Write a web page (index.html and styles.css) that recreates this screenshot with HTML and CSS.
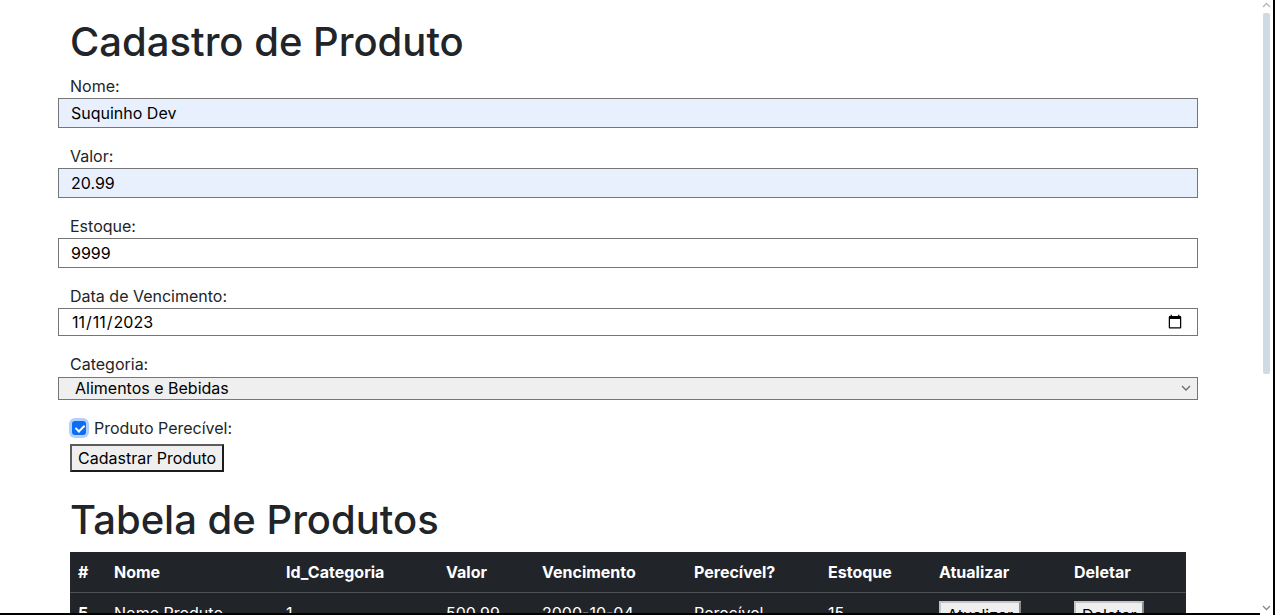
FILE: index.html
```html
<!DOCTYPE html>
<html lang="pt-BR">
<head>
<meta charset="utf-8">
<title>Cadastro de Produto</title>
<link rel="stylesheet" href="styles.css">
</head>
<body>
<main class="page">
  <h1 class="title">Cadastro de Produto</h1>
  <form class="form">
    <div class="field">
      <label class="label" for="nome">Nome:</label>
      <input class="input autofill" id="nome" type="text" value="Suquinho Dev">
    </div>
    <div class="field">
      <label class="label" for="valor">Valor:</label>
      <input class="input autofill" id="valor" type="text" value="20.99">
    </div>
    <div class="field">
      <label class="label" for="estoque">Estoque:</label>
      <input class="input" id="estoque" type="text" value="9999">
    </div>
    <div class="field">
      <label class="label" for="venc">Data de Vencimento:</label>
      <input class="input date" id="venc" type="date" value="2023-11-11">
    </div>
    <div class="field">
      <label class="label" for="cat">Categoria:</label>
      <div class="select-wrap">
        <select class="select" id="cat">
          <option>Alimentos e Bebidas</option>
        </select>
        <svg class="chevron" width="10" height="6" viewBox="0 0 10 6"><path d="M1 1l4 4 4-4" fill="none" stroke="#6b6b6b" stroke-width="1.3"/></svg>
      </div>
    </div>
    <div class="check-row">
      <input class="check" id="perecivel" type="checkbox" checked>
      <label class="check-label" for="perecivel">Produto Perecível:</label>
    </div>
    <button class="btn" type="button">Cadastrar Produto</button>
  </form>

  <h1 class="title title-table">Tabela de Produtos</h1>
  <table class="table">
    <thead>
      <tr>
        <th class="c1">#</th>
        <th class="c2">Nome</th>
        <th class="c3">Id_Categoria</th>
        <th class="c4">Valor</th>
        <th class="c5">Vencimento</th>
        <th class="c6">Perecível?</th>
        <th class="c7">Estoque</th>
        <th class="c8">Atualizar</th>
        <th class="c9">Deletar</th>
      </tr>
    </thead>
    <tbody>
      <tr>
        <th>5</th>
        <td>Nome Produto</td>
        <td>1</td>
        <td>500.99</td>
        <td>2000-10-04</td>
        <td>Perecível</td>
        <td>15</td>
        <td><button class="btn btn-sm" type="button">Atualizar</button></td>
        <td><button class="btn btn-sm" type="button">Deletar</button></td>
      </tr>
    </tbody>
  </table>
</main>

<div class="scrollbar" aria-hidden="true">
  <svg class="sb-arrow" width="9" height="6" viewBox="0 0 9 6"><path d="M1 5l3.5-3.5L8 5" fill="none" stroke="#b8b8b8" stroke-width="1.4"/></svg>
  <div class="sb-track"><div class="sb-thumb"></div></div>
  <svg class="sb-arrow" width="9" height="6" viewBox="0 0 9 6"><path d="M1 1l3.5 3.5L8 1" fill="none" stroke="#8a8a8a" stroke-width="1.4"/></svg>
</div>
<div class="frame-bottom" aria-hidden="true"></div>
</body>
</html>
```
FILE: styles.css
```css
* { box-sizing: border-box; }

html { background: #fff; scrollbar-width: none; }

::-webkit-scrollbar { width: 0; height: 0; }

body {
  margin: 0;
  font-family: Inter, "Noto Sans", sans-serif;
  font-size: 16px;
  line-height: 1.5;
  color: #212529;
}

/* window chrome drawn over the page */
.frame-bottom {
  position: fixed;
  left: 0;
  right: 15px;
  bottom: 0;
  height: 2px;
  background: #000;
}

.scrollbar {
  position: fixed;
  top: 0;
  right: 0;
  bottom: 0;
  width: 15px;
  background: #fff;
  border-right: 2px solid #000;
  display: flex;
  flex-direction: column;
  align-items: center;
  padding: 2px 0 4px 0;
}

.sb-arrow { flex: none; margin-right: 1px; }

.sb-track {
  flex: 1;
  width: 100%;
  display: flex;
  justify-content: center;
  padding: 5px 0 5px 0;
}

.sb-thumb {
  width: 7px;
  height: 361px;
  background: #cfdae3;
  border-radius: 2px;
  margin-right: 1px;
}

.page {
  width: 1140px;
  margin-left: 58px;
  padding-bottom: 420px;
}

.title {
  margin: 18px 0 8px 12px;
  font-size: 40px;
  font-weight: 500;
  line-height: 1.2;
}

.title-table {
  margin-top: 24px;
}

.form { display: flex; flex-direction: column; }

.field {
  display: flex;
  flex-direction: column;
  margin-bottom: 16px;
}

.label {
  margin-left: 12px;
  line-height: 24px;
}

.input {
  width: 100%;
  height: 30px;
  border: 1px solid #767676;
  border-radius: 0;
  padding: 0 12px;
  font-family: inherit;
  font-size: 16px;
  color: #000;
  background: #fff;
  outline: none;
}

.autofill { background: #e8f0fe; }

.date { height: 28px; }

.select-wrap { position: relative; }

.select {
  -webkit-appearance: none;
  appearance: none;
  width: 100%;
  height: 23px;
  border: 1px solid #767676;
  border-radius: 0;
  background: #efefef;
  padding: 0 16px;
  font-family: inherit;
  font-size: 16px;
  line-height: 21px;
  color: #000;
}

.chevron {
  position: absolute;
  right: 7px;
  top: 9px;
}

.check-row {
  display: flex;
  align-items: center;
  height: 24px;
  margin-left: 12px;
}

.check {
  -webkit-appearance: none;
  appearance: none;
  position: relative;
  flex: none;
  width: 14px;
  height: 14px;
  margin: 0 8px 0 2px;
  border-radius: 3px;
  background: #0b6cf5;
  box-shadow: 0 0 0 3px #b3cffc;
}

.check::after {
  content: "";
  position: absolute;
  left: 5px;
  top: 2px;
  width: 4px;
  height: 7px;
  border-right: 2px solid #fff;
  border-bottom: 2px solid #fff;
  transform: rotate(45deg);
}

.check-label { line-height: 24px; }

.btn {
  align-self: flex-start;
  margin: 4px 0 0 12px;
  height: 28px;
  padding: 0 6px;
  font-family: inherit;
  font-size: 16px;
  color: #000;
  background: #efefef;
  border-style: solid;
  border-width: 2px;
  border-color: #5c5c5c #1c1c1c #1c1c1c #5c5c5c;
  border-radius: 0;
}

.table {
  width: 1116px;
  margin-left: 12px;
  border-collapse: collapse;
  table-layout: fixed;
  background: #212529;
  color: #fff;
}

.table th,
.table td {
  padding: 8px;
  text-align: left;
  vertical-align: top;
  line-height: 24px;
  border-bottom: 1px solid #4d5154;
}

.table th { font-weight: 700; }

.c1 { width: 36px; }
.c2 { width: 172px; }
.c3 { width: 160px; }
.c4 { width: 96px; }
.c5 { width: 152px; }
.c6 { width: 134px; }
.c7 { width: 111px; }
.c8 { width: 135px; }
.c9 { width: 120px; }

.btn-sm {
  margin: 0;
  height: 28px;
  padding: 0 6px;
  border-color: #c4c4c4 #8a8a8a #8a8a8a #c4c4c4;
}
```
